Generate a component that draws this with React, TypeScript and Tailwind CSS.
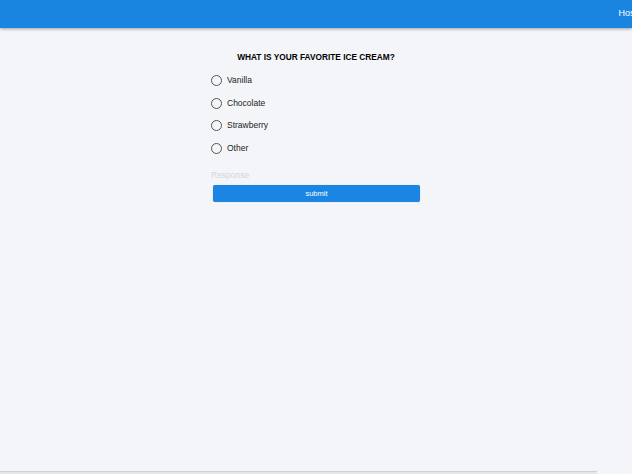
import React from "react";

const options = ["Vanilla", "Chocolate", "Strawberry", "Other"];

const App = () => {
  return (
    <div
      className="h-[474px] w-full flex flex-col bg-[#f4f5f9] overflow-hidden"
      style={{ fontFamily: '"Liberation Sans", Arial, sans-serif' }}
    >
      <header className="h-[28px] shrink-0 flex items-center justify-end bg-[#1a85e0] shadow-[0_1px_3px_rgba(0,0,0,0.35)] overflow-hidden">
        <span className="text-[9px] text-white whitespace-nowrap mr-[-5px]">Host</span>
      </header>

      <main className="flex-1 flex justify-center">
        <div className="w-[210px] pt-[24px] flex flex-col">
          <h1 className="text-[8.3px] leading-[10px] font-bold text-center text-black uppercase">
            What is your favorite ice cream?
          </h1>

          <div className="mt-[7px] flex flex-col">
            {options.map((opt) => (
              <label key={opt} className="h-[22.7px] flex items-center gap-[5px] text-[8.5px] text-[#222]">
                <span className="w-[11px] h-[11px] rounded-full border border-[#555] bg-transparent" />
                {opt}
              </label>
            ))}
          </div>

          <input
            className="mt-[10px] h-[12px] text-[8.5px] bg-transparent outline-none placeholder:text-[#d3d6dc]"
            placeholder="Response"
          />

          <button className="mt-[3px] ml-[2px] w-[207px] h-[17px] rounded-[2px] bg-[#1a85e2] text-white text-[7.5px] shadow-[0_0_1px_rgba(0,0,0,0.3)]">
            submit
          </button>
        </div>
      </main>

      <div className="h-[3px] shrink-0 flex">
        <div className="w-[597px] border-t border-[#cfd0d4] bg-[#e6e7ea]" />
      </div>
    </div>
  );
};

export default App;
